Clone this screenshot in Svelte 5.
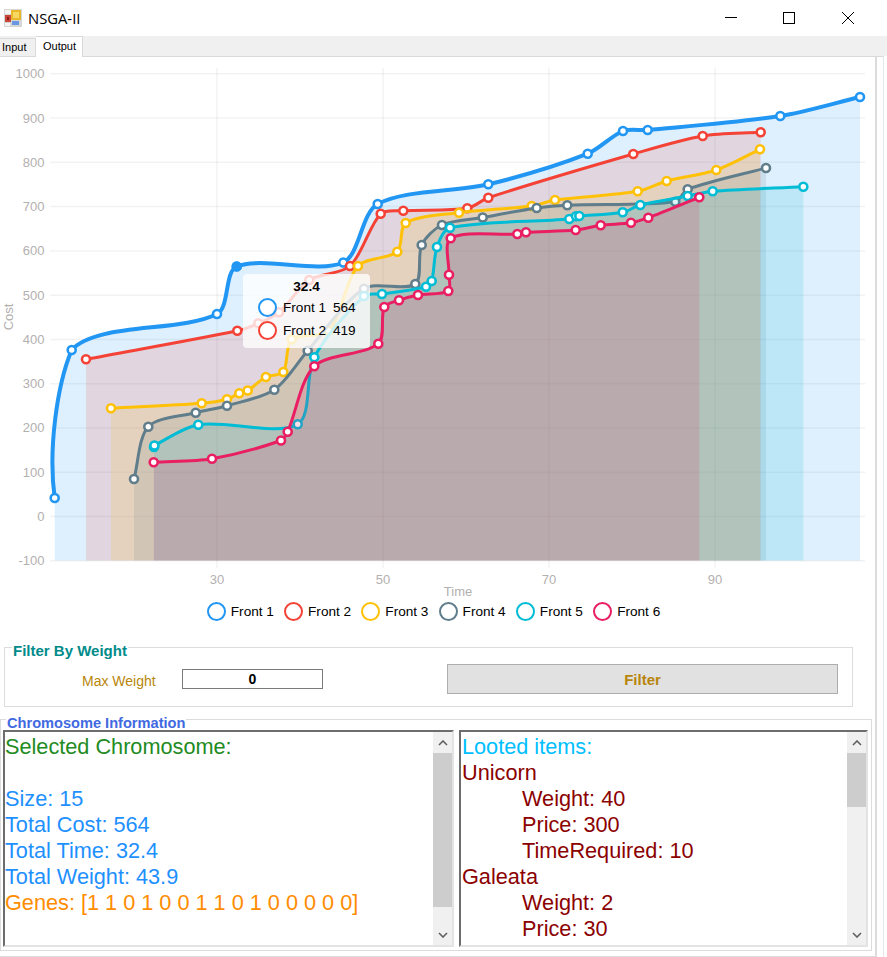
<script>
  const PLOT_BOTTOM = 560.5

  const series = [
    { name: 'Front 1', color: '#2196f3', width: 4, start: [[48, 450], [57, 385]], pts: [[54.7,498],[71.7,350],[217,314],[236.7,266.5],[343.3,262.5],[377.7,204],[488.3,184.3],[587.7,153.7],[623,131],[647.7,130],[780.3,116],[860,97]] },
    { name: 'Front 2', color: '#f44336', width: 3, pts: [[86,359.3],[237.3,330.8],[258.3,323.3],[279,312.3],[309.3,280],[350,266],[380.7,213.7],[403.3,210.7],[467.3,208.3],[488.3,197.7],[633.3,154],[702.7,136],[760.7,132.3]] },
    { name: 'Front 3', color: '#ffc107', width: 3, pts: [[111,408.3],[201.7,403.3],[227,399.3],[239.3,393.2],[247.7,390.5],[265.9,377],[283.3,372],[291.7,339.3],[328.7,330.7],[358,266],[397.3,251.7],[405.7,223],[459,212.7],[531.7,206],[555,200],[637.7,191.3],[666.7,181],[716.3,170],[760,149.3]] },
    { name: 'Front 4', color: '#607d8b', width: 3, pts: [[134,479],[148.3,426.7],[195.7,412.7],[227,405.7],[274.3,389.7],[307.7,350.7],[364,288.7],[415.3,284],[421.7,245],[442,225],[482.7,217.5],[536.7,208],[567.3,205.3],[675.3,201.7],[687.7,189.3],[766,168]] },
    { name: 'Front 5', color: '#00bcd4', width: 3, pts: [[154,447],[154.4,445.5],[198.3,424.7],[297.7,424.2],[314.3,357.3],[364,296],[382,294],[426,286.7],[431.7,281],[437,247],[450,227.7],[569.3,219],[576,216.3],[579.3,216],[622.7,212.3],[640.3,205],[687.7,196],[712.7,191.3],[803.3,186.7]] },
    { name: 'Front 6', color: '#e91e63', width: 3, pts: [[153.7,462.3],[212,458.7],[281,440.5],[287.7,431.7],[314.3,366.3],[378.3,343.7],[384.3,307],[399,300.3],[418,295],[448.3,291],[449,274.7],[450.7,238.3],[517.3,234],[526,232.3],[575.7,230],[600.7,225.3],[631,222.7],[648.3,217.7],[699.3,197.3]] }
  ]

  const yTicks = [1000, 900, 800, 700, 600, 500, 400, 300, 200, 100, 0, -100]
  const xTicks = [30, 50, 70, 90]

  const yPos = (v) => 516.5 - v * 0.4427
  const xPos = (v) => 217 + (v - 30) * 8.3

  // bezier smoothing, same idea as the chart lib (smoothness 0.6)
  function smooth(s, k = 0.6) {
    const pts = s.pts
    let d = `M${pts[0][0]} ${pts[0][1]}`
    const at = (i) => pts[Math.max(0, Math.min(pts.length - 1, i))]
    for (let i = 0; i < pts.length - 1; i++) {
      const [x0, y0] = at(i - 1), [x1, y1] = at(i), [x2, y2] = at(i + 1), [x3, y3] = at(i + 2)
      if (i === 0 && s.start) {
        d += `C${s.start[0].join(' ')} ${s.start[1].join(' ')} ${x2} ${y2}`
        continue
      }
      const xc1 = (x0 + x1) / 2, yc1 = (y0 + y1) / 2
      const xc2 = (x1 + x2) / 2, yc2 = (y1 + y2) / 2
      const xc3 = (x2 + x3) / 2, yc3 = (y2 + y3) / 2
      const l1 = Math.hypot(x1 - x0, y1 - y0)
      const l2 = Math.hypot(x2 - x1, y2 - y1)
      const l3 = Math.hypot(x3 - x2, y3 - y2)
      const k1 = l1 + l2 ? l1 / (l1 + l2) : 0
      const k2 = l2 + l3 ? l2 / (l2 + l3) : 0
      const xm1 = xc1 + (xc2 - xc1) * k1, ym1 = yc1 + (yc2 - yc1) * k1
      const xm2 = xc2 + (xc3 - xc2) * k2, ym2 = yc2 + (yc3 - yc2) * k2
      const c1x = xm1 + (xc2 - xm1) * k + x1 - xm1, c1y = ym1 + (yc2 - ym1) * k + y1 - ym1
      const c2x = xm2 + (xc2 - xm2) * k + x2 - xm2, c2y = ym2 + (yc2 - ym2) * k + y2 - ym2
      d += `C${c1x.toFixed(1)} ${c1y.toFixed(1)} ${c2x.toFixed(1)} ${c2y.toFixed(1)} ${x2} ${y2}`
    }
    return d
  }

  function area(s) {
    const first = s.pts[0], last = s.pts[s.pts.length - 1]
    return `${smooth(s)}L${last[0]} ${PLOT_BOTTOM}L${first[0]} ${PLOT_BOTTOM}Z`
  }

  const chromosome = [
    { text: 'Selected Chromosome:', color: '#228b22' },
    { text: '\u00a0', color: '#228b22' },
    { text: 'Size: 15', color: '#1e90ff' },
    { text: 'Total Cost: 564', color: '#1e90ff' },
    { text: 'Total Time: 32.4', color: '#1e90ff' },
    { text: 'Total Weight: 43.9', color: '#1e90ff' },
    { text: 'Genes: [1 1 0 1 0 0 1 1 0 1 0 0 0 0 0]', color: '#ff8c00' }
  ]

  const looted = [
    { text: 'Looted items:', color: '#00bfff' },
    { text: 'Unicorn', color: '#8b0000' },
    { text: 'Weight: 40', color: '#8b0000', indent: true },
    { text: 'Price: 300', color: '#8b0000', indent: true },
    { text: 'TimeRequired: 10', color: '#8b0000', indent: true },
    { text: 'Galeata', color: '#8b0000' },
    { text: 'Weight: 2', color: '#8b0000', indent: true },
    { text: 'Price: 30', color: '#8b0000', indent: true }
  ]
</script>

{#snippet scrollbar(thumb)}
  <div class="scrollbar">
    <div class="arrow">
      <svg width="10" height="6" viewBox="0 0 10 6"><path d="M1 5l4-4 4 4" fill="none" stroke="#606060" stroke-width="1.6" /></svg>
    </div>
    <div class="track"><div class="thumb" style="height: {thumb}px"></div></div>
    <div class="arrow">
      <svg width="10" height="6" viewBox="0 0 10 6"><path d="M1 1l4 4 4-4" fill="none" stroke="#606060" stroke-width="1.6" /></svg>
    </div>
  </div>
{/snippet}

{#snippet textbox(lines, thumb, cls)}
  <div class="textbox {cls}">
    <div class="lines">
      {#each lines as line}
        <div class="line" class:indent={line.indent} style="color: {line.color}">{line.text}</div>
      {/each}
    </div>
    {@render scrollbar(thumb)}
  </div>
{/snippet}

<div class="window">
  <header class="titlebar">
    <svg class="appicon" width="18" height="18" viewBox="0 0 18 18">
      <rect width="18" height="18" fill="#d6d6d6" />
      <rect x="1" y="1" width="6" height="4" fill="#f4f4f4" />
      <rect x="1" y="6" width="6" height="7" fill="#c8463a" />
      <rect x="3" y="8" width="2" height="3" fill="#8c1a14" />
      <rect x="7" y="1" width="10" height="10" fill="#e8b82a" />
      <rect x="9" y="3" width="6" height="6" fill="#f8d860" />
      <rect x="8" y="12" width="7" height="4" fill="#6a98e0" />
      <rect x="1" y="14" width="5" height="3" fill="#f4f4f4" />
    </svg>
    <span class="title">NSGA-II</span>
    <div class="controls">
      <svg width="12" height="12" viewBox="0 0 12 12" class="min"><path d="M0 5.5h12" stroke="#000" /></svg>
      <svg width="12" height="12" viewBox="0 0 12 12" class="max"><rect x=".5" y=".5" width="11" height="11" fill="none" stroke="#000" /></svg>
      <svg width="12" height="12" viewBox="0 0 12 12" class="close"><path d="M0 0l12 12M12 0L0 12" stroke="#000" /></svg>
    </div>
  </header>

  <nav class="tabs">
    <div class="tab">Input</div>
    <div class="tab active">Output</div>
  </nav>

  <div class="pages">
    <main class="panel">
      <div class="chart">
        <svg width="875" height="541" viewBox="0 57 875 541">
          {#each yTicks as v}
            <line x1="50" x2="865" y1={yPos(v)} y2={yPos(v)} class="grid" />
            <text x="44.5" y={yPos(v) + 4.5} text-anchor="end" class="tick">{v}</text>
          {/each}
          {#each xTicks as v}
            <line x1={xPos(v)} x2={xPos(v)} y1="68" y2="568" class="grid" />
            <text x={xPos(v)} y="584" text-anchor="middle" class="tick">{v}</text>
          {/each}
          <text x="458" y="595.5" text-anchor="middle" class="tick">Time</text>
          <text transform="translate(13 317) rotate(-90)" text-anchor="middle" class="tick">Cost</text>

          {#each series as s}
            <path d={area(s)} fill={s.color} fill-opacity="0.15" />
            <path d={smooth(s)} fill="none" stroke={s.color} stroke-width={s.width} />
            {#each s.pts as [x, y]}
              <circle cx={x} cy={y} r="4" fill="#fff" stroke={s.color} stroke-width="2.6" />
            {/each}
          {/each}
          <circle cx="236.7" cy="266.5" r="5" fill="#2196f3" />
        </svg>

        <div class="tooltip">
          <div class="tip-title">32.4</div>
          <div class="tip-row">
            <span class="dot big" style="border-color: {series[0].color}"></span>
            <span class="tip-name">Front 1</span><span>564</span>
          </div>
          <div class="tip-row">
            <span class="dot big" style="border-color: {series[1].color}"></span>
            <span class="tip-name">Front 2</span><span>419</span>
          </div>
        </div>
      </div>

      <div class="legend">
        {#each series as s}
          <div class="legend-item">
            <span class="dot" style="border-color: {s.color}"></span>
            <span>{s.name}</span>
          </div>
        {/each}
      </div>

      <section class="group filter">
        <span class="caption filter-caption">Filter By Weight</span>
        <span class="max-label">Max Weight</span>
        <div class="input">0</div>
        <button class="filter-btn">Filter</button>
      </section>

      <section class="group info">
        <span class="caption info-caption">Chromosome Information</span>
        {@render textbox(chromosome, 154, 'left')}
        {@render textbox(looted, 54, 'right')}
      </section>
    </main>
    <div class="sliver"></div>
  </div>
</div>

<style>
  :global(body) {
    margin: 0;
    background: #fff;
  }
  .window {
    width: 887px;
    height: 957px;
    display: flex;
    flex-direction: column;
    overflow: hidden;
    background: #fff;
    color: #000;
    font-family: "Liberation Sans", Arial, sans-serif;
    font-size: 13.33px;
  }
  .titlebar {
    height: 36px;
    flex: none;
    display: flex;
    align-items: center;
  }
  .appicon {
    margin-left: 4px;
    margin-top: -1px;
  }
  .title {
    margin-left: 6px;
    font-family: "Open Sans", sans-serif;
    font-size: 14.8px;
    color: #000;
    margin-top: -1px;
  }
  .controls {
    margin-left: auto;
    display: flex;
    align-items: center;
    margin-top: -1px;
  }
  .controls svg {
    display: block;
  }
  .min {
    margin-right: 46px;
  }
  .max {
    margin-right: 47px;
  }
  .close {
    margin-right: 33px;
  }
  .tabs {
    height: 20px;
    flex: none;
    display: flex;
    align-items: flex-end;
    background: #f0f0f0;
    font-size: 11px;
  }
  .tab {
    height: 18px;
    line-height: 17px;
    box-sizing: border-box;
    width: 36px;
    padding-left: 2px;
    border-right: 1px solid #d9d9d9;
    border-top: 1px solid #d9d9d9;
  }
  .tab.active {
    height: 21px;
    width: 47px;
    padding-left: 7px;
    background: #fff;
    margin-bottom: -1px;
    position: relative;
    line-height: 18px;
  }
  .pages {
    flex: 1;
    display: flex;
    min-height: 0;
  }
  .panel {
    width: 877px;
    box-sizing: border-box;
    flex: none;
    border-top: 1px solid #d9d9d9;
    border-right: 2px solid #dcdcdc;
    border-bottom: 1px solid #dcdcdc;
  }
  .sliver {
    width: 7px;
    box-sizing: border-box;
    border-top: 1px solid #d9d9d9;
    border-right: 1px solid #e6e6e6;
  }
  .chart {
    position: relative;
    height: 541px;
  }
  .chart svg {
    display: block;
  }
  .grid {
    stroke: #000;
    stroke-opacity: 0.05;
    stroke-width: 1.5;
  }
  .tick {
    font-family: "Liberation Sans", Arial, sans-serif;
    font-size: 13px;
    fill: #b3b0b0;
  }
  .tooltip {
    position: absolute;
    left: 243px;
    top: 217px;
    width: 127px;
    height: 74px;
    box-sizing: border-box;
    border-radius: 4px;
    background: rgba(255, 255, 255, 0.78);
    padding: 5px 0 0 15px;
    font-size: 13.6px;
  }
  .tip-title {
    font-weight: bold;
    text-align: center;
    line-height: 16px;
    margin-left: -15px;
    margin-bottom: 1px;
  }
  .tip-row {
    display: flex;
    align-items: center;
    height: 23px;
  }
  .tip-name {
    width: 50px;
    margin-left: 6px;
  }
  .dot {
    display: block;
    width: 19px;
    height: 19px;
    box-sizing: border-box;
    border: 2.6px solid;
    border-radius: 50%;
    background: #fff;
    flex: none;
  }
  .legend {
    height: 26px;
    padding-right: 8px;
    display: flex;
    justify-content: center;
    align-items: center;
    gap: 10.2px;
    font-size: 13.6px;
  }
  .legend-item {
    display: flex;
    align-items: center;
    gap: 5px;
  }
  .group {
    position: relative;
    box-sizing: border-box;
    border: 1px solid #dcdcdc;
  }
  .caption {
    position: absolute;
    background: #fff;
    font-weight: bold;
    line-height: 14px;
    padding: 0 1px;
  }
  .filter {
    margin: 23px 0 0 4px;
    width: 849px;
    height: 60px;
    display: flex;
    align-items: center;
    padding: 16px 0 12px 77px;
  }
  .filter-caption {
    left: 7px;
    top: -4px;
    color: #008b8b;
    font-size: 15px;
  }
  .max-label {
    width: 100px;
    color: #b8860b;
    font-size: 14px;
    margin-top: 4px;
  }
  .input {
    width: 141px;
    height: 20px;
    box-sizing: border-box;
    border: 1px solid #7a7a7a;
    text-align: center;
    font-weight: bold;
    font-size: 14px;
    line-height: 18px;
  }
  .filter-btn {
    margin-left: 124px;
    width: 391px;
    height: 30px;
    background: #e1e1e1;
    border: 1px solid #adadad;
    border-radius: 0;
    color: #b8860b;
    font: bold 15px "Liberation Sans", Arial, sans-serif;
  }
  .info {
    margin-top: 12px;
    width: 872px;
    height: 232px;
    display: flex;
    gap: 5px;
    padding: 10px 0 0 2px;
  }
  .info-caption {
    left: 5px;
    top: -4px;
    color: #4169e1;
    font-size: 14.6px;
  }
  .textbox {
    height: 217px;
    box-sizing: border-box;
    display: flex;
    border-top: 2px solid #6d6d6d;
    border-left: 2px solid #6d6d6d;
    border-right: 2px solid #e3e3e3;
    border-bottom: 2px solid #e3e3e3;
  }
  .textbox.left {
    width: 451px;
  }
  .textbox.right {
    width: 409px;
  }
  .textbox.right .lines {
    padding-left: 1px;
  }
  .lines {
    flex: 1;
    min-width: 0;
    overflow: hidden;
    padding-top: 2px;
    font-size: 21.7px;
    line-height: 26px;
    white-space: nowrap;
  }
  .line.indent {
    padding-left: 60px;
  }
  .scrollbar {
    width: 19px;
    flex: none;
    display: flex;
    flex-direction: column;
    background: #f0f0f0;
  }
  .arrow {
    height: 21px;
    display: flex;
    align-items: center;
    justify-content: center;
    flex: none;
  }
  .track {
    flex: 1;
  }
  .thumb {
    background: #cdcdcd;
  }
</style>
